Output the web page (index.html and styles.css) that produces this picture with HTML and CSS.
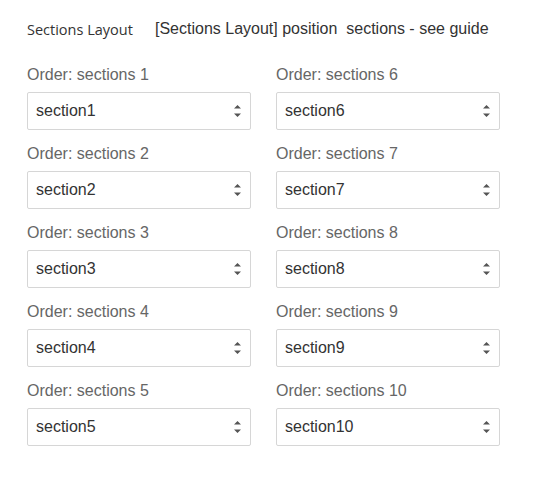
FILE: index.html
```html
<!DOCTYPE html>
<html>
<head>
<meta charset="utf-8">
<link rel="stylesheet" href="styles.css">
</head>
<body>
<div class="page">
  <div class="header">
    <span class="title">Sections Layout</span>
    <span class="desc">[Sections Layout] position&nbsp; sections - see guide</span>
  </div>
  <div class="grid">
    <div class="col">
      <div class="field"><div class="label">Order: sections 1</div><div class="select"><span>section1</span><svg class="arr" width="7" height="12" viewBox="0 0 7 12"><path d="M3.5 0L7 3.6H0Z M3.5 12L7 8.4H0Z" fill="#555"/></svg></div></div>
      <div class="field"><div class="label">Order: sections 2</div><div class="select"><span>section2</span><svg class="arr" width="7" height="12" viewBox="0 0 7 12"><path d="M3.5 0L7 3.6H0Z M3.5 12L7 8.4H0Z" fill="#555"/></svg></div></div>
      <div class="field"><div class="label">Order: sections 3</div><div class="select"><span>section3</span><svg class="arr" width="7" height="12" viewBox="0 0 7 12"><path d="M3.5 0L7 3.6H0Z M3.5 12L7 8.4H0Z" fill="#555"/></svg></div></div>
      <div class="field"><div class="label">Order: sections 4</div><div class="select"><span>section4</span><svg class="arr" width="7" height="12" viewBox="0 0 7 12"><path d="M3.5 0L7 3.6H0Z M3.5 12L7 8.4H0Z" fill="#555"/></svg></div></div>
      <div class="field"><div class="label">Order: sections 5</div><div class="select"><span>section5</span><svg class="arr" width="7" height="12" viewBox="0 0 7 12"><path d="M3.5 0L7 3.6H0Z M3.5 12L7 8.4H0Z" fill="#555"/></svg></div></div>
    </div>
    <div class="col">
      <div class="field"><div class="label">Order: sections 6</div><div class="select"><span>section6</span><svg class="arr" width="7" height="12" viewBox="0 0 7 12"><path d="M3.5 0L7 3.6H0Z M3.5 12L7 8.4H0Z" fill="#555"/></svg></div></div>
      <div class="field"><div class="label">Order: sections 7</div><div class="select"><span>section7</span><svg class="arr" width="7" height="12" viewBox="0 0 7 12"><path d="M3.5 0L7 3.6H0Z M3.5 12L7 8.4H0Z" fill="#555"/></svg></div></div>
      <div class="field"><div class="label">Order: sections 8</div><div class="select"><span>section8</span><svg class="arr" width="7" height="12" viewBox="0 0 7 12"><path d="M3.5 0L7 3.6H0Z M3.5 12L7 8.4H0Z" fill="#555"/></svg></div></div>
      <div class="field"><div class="label">Order: sections 9</div><div class="select"><span>section9</span><svg class="arr" width="7" height="12" viewBox="0 0 7 12"><path d="M3.5 0L7 3.6H0Z M3.5 12L7 8.4H0Z" fill="#555"/></svg></div></div>
      <div class="field"><div class="label">Order: sections 10</div><div class="select"><span>section10</span><svg class="arr" width="7" height="12" viewBox="0 0 7 12"><path d="M3.5 0L7 3.6H0Z M3.5 12L7 8.4H0Z" fill="#555"/></svg></div></div>
    </div>
  </div>
</div>
</body>
</html>
```

FILE: styles.css
```css
html, body {
  margin: 0;
  padding: 0;
  background: #fff;
}
.page {
  padding: 19px 0 0 27px;
  font-family: "Liberation Sans", Arial, sans-serif;
}
.header {
  display: flex;
  align-items: center;
  height: 20px;
  margin-bottom: 27px;
}
.title {
  font-family: "Open Sans", "Noto Sans", sans-serif;
  font-size: 14.5px;
  color: #333;
  width: 128px;
}
.desc {
  font-size: 16px;
  color: #333;
}
.grid {
  display: flex;
  gap: 25px;
}
.col {
  width: 224px;
  display: flex;
  flex-direction: column;
}
.field {
  margin-bottom: 15px;
}
.label {
  font-size: 16px;
  line-height: 18px;
  color: #666;
  margin-bottom: 8px;
}
.select {
  box-sizing: border-box;
  height: 38px;
  border: 1px solid #d6d6d6;
  border-radius: 2px;
  display: flex;
  align-items: center;
  justify-content: space-between;
  padding: 0 9px 0 8px;
  font-size: 16px;
  color: #333;
}
.arr {
  display: block;
}
```
